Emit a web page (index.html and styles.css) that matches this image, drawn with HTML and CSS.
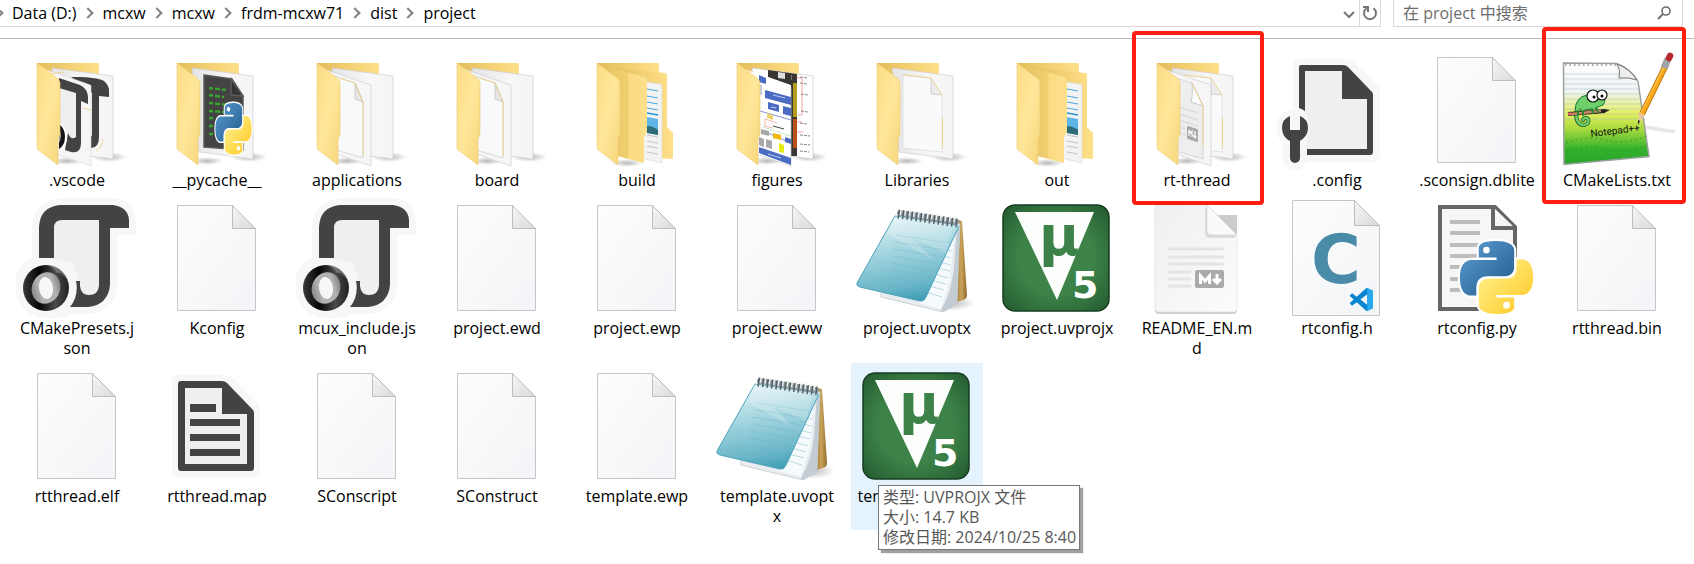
FILE: index.html
```
<!DOCTYPE html>
<html lang="zh-CN">
<head>
<meta charset="utf-8">
<title>project</title>
<link rel="stylesheet" href="styles.css">
</head>
<body>
<svg class="defs" aria-hidden="true">
  <defs>
    <linearGradient id="gFlap" x1="0" y1="0" x2="1" y2="1"><stop offset="0" stop-color="#fdde86"/><stop offset=".5" stop-color="#ffe69a"/><stop offset="1" stop-color="#f6d67a"/></linearGradient>
    <linearGradient id="gBack" x1="0" y1="0" x2="1" y2="0"><stop offset="0" stop-color="#e3bd58"/><stop offset="1" stop-color="#ffe08a"/></linearGradient>
    <linearGradient id="gInner" x1="0" y1="0" x2="1" y2="0"><stop offset="0" stop-color="#e9c765"/><stop offset=".5" stop-color="#f0cf70"/><stop offset=".55" stop-color="#fbdc82"/><stop offset="1" stop-color="#fbdf8b"/></linearGradient>
    <linearGradient id="gSheet" x1="0" y1="0" x2="1" y2="0"><stop offset="0" stop-color="#e4e4e6"/><stop offset=".6" stop-color="#f7f7f8"/><stop offset="1" stop-color="#f5f5f6"/></linearGradient>
    <linearGradient id="gDoc" x1="0" y1="0" x2="1" y2="1"><stop offset="0" stop-color="#fdfdfd"/><stop offset="1" stop-color="#f3f4f7"/></linearGradient>
    <linearGradient id="gFold" x1="0" y1="0" x2="1" y2="1"><stop offset="0" stop-color="#f6f6f6"/><stop offset="1" stop-color="#dadada"/></linearGradient>
    <radialGradient id="gShade"><stop offset="0" stop-color="#000" stop-opacity=".28"/><stop offset="1" stop-color="#000" stop-opacity="0"/></radialGradient>
    <linearGradient id="gRingOut" x1="0" y1="0" x2="1" y2="0"><stop offset="0" stop-color="#3a3a3a"/><stop offset=".35" stop-color="#050505"/><stop offset=".7" stop-color="#4a4a4a"/><stop offset="1" stop-color="#222"/></linearGradient>
    <linearGradient id="gRingIn" x1="0" y1="1" x2="1" y2="0"><stop offset="0" stop-color="#666"/><stop offset=".35" stop-color="#b4b4b4"/><stop offset=".7" stop-color="#b0b0b0"/><stop offset="1" stop-color="#555"/></linearGradient>
    <linearGradient id="gPyBlue" x1="0" y1="0" x2="1" y2="1"><stop offset="0" stop-color="#5a9fd4"/><stop offset="1" stop-color="#24588a"/></linearGradient>
    <linearGradient id="gPyGold" x1="0" y1="0" x2="1" y2="1"><stop offset=".3" stop-color="#ffe873"/><stop offset="1" stop-color="#ffc620"/></linearGradient>
    <linearGradient id="gCover" x1=".4" y1="0" x2=".6" y2="1"><stop offset="0" stop-color="#e2f3f7"/><stop offset=".35" stop-color="#a9d8e2"/><stop offset=".8" stop-color="#69b6c8"/><stop offset="1" stop-color="#3f9db5"/></linearGradient>
    <linearGradient id="gWood" x1="0" y1="0" x2="1" y2="0"><stop offset="0" stop-color="#8a6526"/><stop offset=".6" stop-color="#c9a35a"/><stop offset="1" stop-color="#8f6a2b"/></linearGradient>
    <radialGradient id="gGreen" r=".7"><stop offset=".5" stop-color="#3d8349"/><stop offset="1" stop-color="#23592f"/></radialGradient>
    <linearGradient id="gMd" x1="0" y1="0" x2="1" y2="1"><stop offset="0" stop-color="#efefef"/><stop offset="1" stop-color="#fcfcfc"/></linearGradient>
    <linearGradient id="gNpp" x1="0" y1="0" x2="0" y2="1"><stop offset="0" stop-color="#fdfdfd"/><stop offset=".28" stop-color="#f0f4f4"/><stop offset=".5" stop-color="#e6ee5c"/><stop offset=".65" stop-color="#a8da3e"/><stop offset=".85" stop-color="#34b22c"/><stop offset="1" stop-color="#27a42a"/></linearGradient>

    <symbol id="python" viewBox="-1 -1 26 26">
      <g stroke="#fff" stroke-width="1.4" stroke-linejoin="round" paint-order="stroke">
      <path fill="url(#gPyBlue)" d="M14.25.18l.9.2.73.26.59.3.45.32.34.34.25.34.16.33.1.3.04.26.02.2-.01.13V8.5l-.05.63-.13.55-.21.46-.26.38-.3.31-.33.25-.35.19-.35.14-.33.1-.3.07-.26.04-.21.02H8.77l-.69.05-.59.14-.5.22-.41.27-.33.32-.27.35-.2.36-.15.37-.1.35-.07.32-.04.27-.02.21v3.06H3.17l-.21-.03-.28-.07-.32-.12-.35-.18-.36-.26-.36-.36-.35-.46-.32-.59-.28-.73-.21-.88-.14-1.05-.05-1.23.06-1.22.16-1.04.24-.87.32-.71.36-.57.4-.44.42-.33.42-.24.4-.16.36-.1.32-.05.24-.01h.16l.06.01h8.16v-.83H6.18l-.01-2.75-.02-.37.05-.34.11-.31.17-.28.25-.26.31-.23.38-.2.44-.18.51-.15.58-.12.64-.1.71-.06.77-.04.84-.02 1.27.05z"/>
      <path fill="url(#gPyGold)" d="M21.04 6.11l.28.06.32.12.35.18.36.27.36.35.35.47.32.59.28.73.21.88.14 1.04.05 1.23-.06 1.23-.16 1.04-.24.86-.32.71-.36.57-.4.45-.42.33-.42.24-.4.16-.36.09-.32.05-.24.02-.16-.01h-8.22v.82h5.84l.01 2.76.02.36-.05.34-.11.31-.17.29-.25.25-.31.24-.38.2-.44.17-.51.15-.58.13-.64.09-.71.07-.77.04-.84.01-1.27-.04-1.07-.14-.9-.2-.73-.25-.59-.3-.45-.33-.34-.34-.25-.34-.16-.33-.1-.3-.04-.25-.02-.2.01-.13v-5.34l.05-.64.13-.54.21-.46.26-.38.3-.32.33-.24.35-.2.35-.14.33-.1.3-.06.26-.04.21-.02.13-.01h5.84l.69-.05.59-.14.5-.21.41-.28.33-.32.27-.35.2-.36.15-.36.1-.35.07-.32.04-.28.02-.21V6.07h2.09l.14.01z"/>
      </g>
      <circle cx="8.7" cy="2.95" r="1.1" fill="#fff"/><circle cx="15.3" cy="21.1" r="1.1" fill="#fff"/>
    </symbol>

    <g id="folderBack"><ellipse cx="98" cy="110" rx="18" ry="5" fill="url(#gShade)"/><ellipse cx="56" cy="114" rx="16" ry="4" fill="url(#gShade)"/><path fill="url(#gBack)" d="M26 16h61q1 0 1 1v40H26z"/></g>
    <g id="folderFront"><path fill="url(#gFlap)" stroke="#eccb70" stroke-width=".6" d="M26 16L46 31q3 2 3 5v51l-2 5v26L26 102z"/></g>
    <path id="sheetBack" fill="url(#gSheet)" stroke="#cfcfcf" stroke-width=".7" d="M41 21l61 8v83l-54-7z"/>
    <path id="sheetFront" fill="#f6f6f7" stroke="#cfcfcf" stroke-width=".7" d="M33 22l47 16v81l-35-12V32z"/>
    <g id="docBack"><path fill="#f9fafb" stroke="#cfcfcf" stroke-width=".7" stroke-dasharray="3 1" d="M52 28l28 3 11 17v57l-39-4z"/><path fill="#ececec" stroke="#bbb" stroke-width=".6" d="M80 31v16l11 1"/><path fill="none" stroke="#efcf78" stroke-width=".8" d="M52 28l28 3 11 17M91.500 71v29"/></g>
    <g id="docFront"><path fill="#f8f9fb" stroke="#ccc" stroke-width=".7" d="M44 29l20 7 8 19v56l-27-8z"/><path fill="#e6e6e6" stroke="#bbb" stroke-width=".6" d="M64 36v16l8 3z"/><path fill="none" stroke="#efcf78" stroke-width=".8" d="M48 31l16 5 8 19v54"/></g>

    <symbol id="f-docs" viewBox="0 0 132 124"><use href="#folderBack"/><use href="#sheetBack"/><use href="#sheetFront"/><use href="#docFront"/><use href="#folderFront"/></symbol>
    <symbol id="f-one" viewBox="0 0 132 124"><use href="#folderBack"/><use href="#sheetBack"/><use href="#docBack"/><use href="#folderFront"/></symbol>
    <symbol id="f-md" viewBox="0 0 132 124"><use href="#folderBack"/><use href="#sheetBack"/><use href="#docBack"/><use href="#sheetFront"/>
      <path fill="#eee" stroke="#ccc" stroke-width=".7" d="M42 30l19 6 11 23v53l-27-8z"/><path fill="#fafafa" stroke="#bbb" stroke-width=".7" d="M61 36q1 12-1 19l12 4z"/><path fill="none" stroke="#efcf78" stroke-width=".8" d="M61 36l11 23v40"/>
      <path stroke="#dcdcdc" stroke-width="1.500" d="M48 60l19 6M48 67l19 6M48 73l19 6M48 80l7 2M48 86l7 2"/><path fill="#a8a8a8" d="M57 79l9 3q1 0 1 1v11q0 1-1 1l-9-3q-1 0-1-1V80z"/><path fill="none" stroke="#fff" stroke-width="1.200" d="M58 89v-6l1.500 3 1.500-2v6M64 84v6m-2-2l2 3 1.500-2"/>
      <use href="#folderFront"/></symbol>
    <symbol id="f-vscode" viewBox="0 0 132 124"><use href="#folderBack"/><use href="#sheetBack"/>
      <path fill="#434343" d="M60 30q19 0 31 4 7 3 7 10v6l-10-1v41q0 11-8 11h-4V88q3 5 5 0V46z"/><path fill="#f6f6f7" d="M33 22l47 16v81l-35-12V32z" stroke="#d5d5d5" stroke-width=".6"/>
      <path fill="#434343" d="M62 30q24 0 31 4 5 4 5 12v3l-12-1-6-10z"/>
      <path fill="#eeeef0" d="M48 40l18 5v48q-4 7-9-1l-9-7z"/><path fill="#434343" d="M48 31l21 7q8 4 8 12v7l-7-3v42q0 11-10 9l-6-2 3-17q3 8 8 4V46l-17-5z"/><path fill="#fff" d="M48 75q8 5 8 15t-8 16z"/><path fill="#141414" d="M48 77q6 4 6 13 0 8-6 12z"/><path fill="#999" d="M48 82q4 7 0 14z"/><path fill="none" stroke="#efcf78" stroke-width=".8" d="M40 27q7-2 14-2M72 61l8 2M92 92q-1 8-7 12"/>
      <use href="#folderFront"/></symbol>
    <symbol id="f-py" viewBox="0 0 132 124"><use href="#folderBack"/><use href="#sheetBack"/>
      <path fill="#434343" stroke="#5b5b5b" stroke-width="1.500" d="M53 28l28 4 11 17v54l-39-3z"/><path fill="#333" stroke="#5b5b5b" stroke-width="1.500" d="M80 32v16l12 1z"/><path fill="none" stroke="#38a52f" stroke-width="2.400" stroke-dasharray="4 2 5 2" d="M58 41l18 2M58 48l15 2M58 56l20 2M58 64l15 1M58 71h6M58 79h6M58 87h6"/>
      <g transform="translate(64.500 56) scale(1.500 2.150)"><use href="#python" x="-1" y="-1" width="26" height="26"/></g><use href="#folderFront"/></symbol>
    <symbol id="f-nested" viewBox="0 0 132 124"><ellipse cx="56" cy="116" rx="16" ry="4" fill="url(#gShade)"/><path fill="url(#gBack)" d="M26 16h61q1 0 1 1v30H26z"/>
      <path fill="url(#gBack)" d="M37 20l57 6q2 0 2 2v52l6 6v25q0 1-1 1l-27-2V50z"/><path fill="#f3f3f4" stroke="#d8d8d8" stroke-width=".6" d="M70 34l19 3q2 0 2 2v77l-21-5z"/>
      <path stroke="#4aa8dc" stroke-width="1" d="M76 42l11 2M76 49l11 2M76 55l11 2M76 61l11 2"/><path stroke="#2492d0" stroke-width="1.500" d="M76 66l11 2"/><path fill="#5fb4e6" d="M76 70l11 2v16l-11-2z"/><path fill="#2c6b78" d="M76 79q6 0 11 4v5l-11-2z"/><path stroke="#c4c4c4" d="M76 88l11 2M76 94l11 2M76 99l11 2M76 105l11 2"/>
      <path fill="url(#gInner)" d="M37 20l37 10q2 1 2 3v52l-3 5v26l-27-7V33z"/><use href="#folderFront"/></symbol>
    <symbol id="f-fig" viewBox="0 0 132 124"><use href="#folderBack"/><path fill="#fff" stroke="#ccc" stroke-width=".7" d="M41 21l61 8v83l-54-7z"/>
      <path fill="#3a3634" d="M57 23l29 4v82h-6V38l-23-8z"/><path fill="#777" d="M76 27l5 1v5l-5-1z"/><path fill="#b39d1f" d="M82 36h4v34h-4z"/><path fill="#b9521a" d="M82 72h4v29h-4z"/><path stroke="#888" stroke-width="1" stroke-dasharray="3 1" d="M89 30l8 1M89 36l7 1M90 47l7 1M90 64l7 1M89 76l7 1M89 88l10 1M89 97l10 1M89 104l9 1"/><path fill="none" stroke="#e26a6a" stroke-width=".6" d="M86 31h5v37h-4M86 75h5M86 85h6"/>
      <path fill="#fff" d="M33 22l47 16v81l-35-12V32z"/><path fill="none" stroke="#ccc" stroke-width=".7" d="M80 40v79l-35-12"/><path fill="#3a3634" d="M57 24l23 3v11l-19-7z"/><path fill="#ddd" d="M67 25l7 1v6l-7-1z"/>
      <path fill="#4c6cc4" d="M48 28l7 3v6l-7-2zM54 43l26 7v8l-26-7zM57 55l11 3v7l-11-3zM72 59l8 2v8l-8-2zM48 100l32 11v7l-32-12zM74 90l6 2v5l-6-2z"/><path stroke="#bccaf0" stroke-width="1" d="M62 48l12 3M60 60l5 1M57 107l13 4"/><path fill="none" stroke="#4c6cc4" stroke-width=".7" d="M49 64l31 9M50 83l30 13M50 38v10"/><path fill="#ecd36c" d="M56 66l6 2v5l-6-2z"/><path fill="#f2b705" d="M62 86l8 2v5l-8-2z"/><path fill="#e6ea15" d="M68 96l5 2v8l-5-1z"/><path fill="#a8a8a8" d="M50 82l8 2v5l-8-2zM48 90l5 2v8l-5-2zM55 92l6 2v8l-6-2z"/><path stroke="#444" stroke-width="1" d="M62 79l11 3"/><path fill="none" stroke="#e98" stroke-width=".7" d="M54 72v7l8 2M54 72l12 4"/><path stroke="#9cd69c" stroke-width=".6" d="M52 80l27 9"/>
      <use href="#folderFront"/></symbol>

    <symbol id="doc" viewBox="0 0 132 124"><path fill="url(#gDoc)" stroke="#c6c6c6" d="M26.500 10.500h55l23 23v82h-78z"/><path fill="url(#gFold)" stroke="#bdbdbd" d="M81.500 10.500v23h23z"/></symbol>
    <symbol id="config" viewBox="0 0 132 124"><path fill="#f7f7f7" d="M29 12h46q5 0 8 3l23 23q3 3 3 8v62q0 7-7 7H30V90h-8V19q0-7 7-7z"/><circle cx="24" cy="81" r="19" fill="#f7f7f7"/><rect x="12" y="88" width="24" height="35" rx="12" fill="#f7f7f7"/>
      <path fill="#efeff1" d="M33 23h40l25 27v52H36V88q6-14-3-23z"/><path fill="#434343" d="M30 18h42q3 0 5 2l24 25q1 1 1 3v57q0 3-3 3H36v-6h60V52H71V24H34v40q-3-2-6-3V20q0-2 2-2z"/><path fill="#434343" d="M19 69v14h10V69q8 3 8 12 0 8-8 13v17a5 5 0 0 1-10 0V94q-8-4-8-13 0-9 8-12z"/></symbol>
    <symbol id="map" viewBox="0 0 132 124"><path fill="#f7f7f7" d="M28 12h46q5 0 8 3l24 24q3 3 3 8v60q0 7-7 7H28q-7 0-7-7V19q0-7 7-7z"/><path fill="#434343" d="M30 18h41q3 0 5 2l26 27q1 1 1 3v55q0 3-3 3H30q-3 0-3-3V21q0-3 3-3z"/><path fill="#efeff1" d="M34 25h37v26h25v50H34z"/><path fill="#434343" d="M39 41h26v8H39zM39 56h50v7H39zM39 71h50v7H39zM39 86h50v7H39z"/></symbol>
    <symbol id="json" viewBox="0 0 132 124"><path fill="#f7f7f7" d="M49 3h54q22 4 22 25v12h-19v50q-2 27-29 29H59q-10 6-24 4Q10 121 5 98V78h2q5-13 14-16V32Q23 6 49 3z"/><path fill="#efeff1" d="M43 33q0-8 8-8h37v66q-1 9-10 9-8 0-9-9L62 68l-19-5z"/>
      <path fill="#434343" d="M28 63V32Q29 12 49 10h53q15 2 16 15v8H99v57q-2 20-22 22H59q9-11 6-26h4v5q1 9 9 9 9 0 10-9V25H51q-8 0-8 8v30z"/><circle cx="35" cy="93" r="30" fill="#f7f7f7"/>
      <circle cx="35" cy="93" r="23" fill="url(#gRingOut)"/><path fill="#999" opacity=".55" d="M36 70q15 1 19 13-5-6-9-5-4-6-10-8z"/>
      <ellipse cx="35" cy="93" rx="14" ry="16" fill="url(#gRingIn)" transform="rotate(25 35 93)"/><ellipse cx="35" cy="93" rx="7" ry="11" fill="#f7f7f7" transform="rotate(-8 35 93)"/></symbol>
    <symbol id="pad" viewBox="0 0 132 124"><ellipse cx="100" cy="108" rx="24" ry="8" fill="url(#gShade)"/><path fill="url(#gWood)" d="M107 25l4 1 5 74q0 4-4 5l-10 3z"/><path fill="#e9edf0" stroke="#b9c2c8" stroke-width=".7" d="M106 27l3 2-3 80-14 8-62-15v-5l41 9z"/><path fill="#f5fafc" d="M104 32l-5 52-9 30-22-6 6-5z"/><path fill="#c3ccd2" d="M106 30l3 1-3 78-14 8q-3-1-1-4 9-14 12-40z"/><path stroke="#9fcbd8" stroke-width=".7" d="M95 55l6 1M92 61l8 2M89 67l11 3M86 73l13 3M83 79l14 4M80 85l15 4M78 91l15 4M75 97l16 5"/>
      <path fill="url(#gCover)" stroke="#4ba3b8" d="M44 21l62 9q2 1 1 3L75 102q-2 5-6 4L9 92q-4-1-3-4z"/><path stroke="#72b5c7" stroke-width=".5" opacity=".8" d="M45 40l53 8M44 47l50 8M42 54l49 8M41 61l46 8M39 68l45 8M38 75l42 7M36 82l41 7M34 89l40 7"/><path fill="#fff" opacity=".2" d="M44 21l-9 17 46 26-18-20 32 14 7-29z"/>
      <path stroke="#8b959b" stroke-width="6" stroke-linecap="round" d="M49 18l56 9"/><path stroke="#555e63" stroke-width="9" stroke-dasharray="1.500 3" d="M47 19l59 9"/><path stroke="#e9eef0" stroke-width="6" stroke-dasharray="1.500 3" d="M49 17l58 8"/></symbol>
    <symbol id="keil" viewBox="0 0 132 124"><rect x="12" y="10" width="106" height="106" rx="12" fill="url(#gGreen)" stroke="#153c20" stroke-width="1.500"/><path fill="#fcfefc" d="M24 17h79l-37 88z"/><text x="48" y="60" class="mu">µ</text><text x="81" y="103" class="five">5</text></symbol>
    <symbol id="md" viewBox="0 0 132 124"><path fill="#ccc" d="M24 20h82v95q0 4-4 4H28q-4 0-4-4z"/><path fill="url(#gMd)" stroke="#e2e2e2" stroke-width=".8" d="M28 10h48l30 30v73q0 4-4 4H28q-4 0-4-4V14q0-4 4-4z"/><path fill="#000" opacity=".1" d="M74 12v26q0 5 5 5h25l1-4z"/><path fill="#fafafa" stroke="#d4d4d4" stroke-width=".8" d="M76 10v26q0 4 4 4h26z"/><path stroke="#e4e4e4" stroke-width="3" stroke-linecap="round" d="M38 54h54M38 62h54M38 69h54M38 77h21M38 84h21M38 91h21"/><rect x="64" y="75" width="29" height="18" rx="2" fill="#aaa"/><path fill="none" stroke="#fff" stroke-width="3" d="M69.500 89v-8l4.500 5 4.500-5v8M86 79v8m-4-3l4 4 4-4"/></symbol>
    <symbol id="chead" viewBox="0 0 132 124"><path fill="url(#gDoc)" stroke="#c6c6c6" d="M21.500 5.500h62l25 25v90h-87z"/><path fill="url(#gFold)" stroke="#bdbdbd" d="M83.500 5.500v25h25z"/><text x="40" y="88" class="cee">C</text><svg x="79" y="93" width="23" height="23" viewBox="0 0 24 24"><path fill="#0a84d0" d="M23.150 2.587L18.210.210a1.494 1.494 0 0 0-1.705.290l-9.460 8.630-4.120-3.128a.999.999 0 0 0-1.276.057L.327 7.261A1 1 0 0 0 .326 8.740L3.899 12 .326 15.260a1 1 0 0 0 .001 1.479L1.650 17.940a.999.999 0 0 0 1.276.057l4.120-3.128 9.460 8.630a1.492 1.492 0 0 0 1.704.290l4.942-2.377A1.500 1.500 0 0 0 24 20.060V3.939a1.500 1.500 0 0 0-.850-1.352zm-5.146 14.861L10.826 12l7.178-5.448v10.896z"/><path fill="#28a9f0" d="M18 0l5.500 2.600q.5.400.5 1.300v16.200q0 .9-.5 1.300L18 24z"/></svg></symbol>
    <symbol id="pydoc" viewBox="0 0 132 124"><path fill="#f6f6f6" stroke="#666" stroke-width="4" d="M29 12h55l20 20v82H29z"/><path fill="#f6f6f6" stroke="#666" stroke-width="4" d="M82 12v21h22"/><path stroke="#bdbdbd" stroke-width="4" d="M39 27h30M39 38h30M39 50h30M39 61h30M39 72h20M39 84h20M39 95h20"/><path fill="#fff" d="M70 90h40v30H68z"/><use href="#python" x="46" y="43" width="79" height="79"/></symbol>
    <symbol id="npp" viewBox="0 0 132 124"><path fill="#ddd" d="M92 78l32 5q2 4-4 3l-28-4z" opacity=".7"/><path fill="url(#gNpp)" stroke="#9aa09a" stroke-width="1.500" d="M12.500 16l53 .5q14 5 21.500 18l11 75-85 8z"/><path fill="none" stroke="#9dbcc4" stroke-width=".7" opacity=".7" d="M14 27h56M14 32h58M14 37h71M14 42h73M14 47h74M14 52h74M14 57h75M14 62h75M14 67h76M14 72h77"/><path stroke="#aaa" stroke-width="2" stroke-dasharray="1.500 3" d="M14 18h53"/><path fill="#eee" stroke="#777" d="M66 17q4 6 2 14 10-1 18 2-7-11-20-16z"/>
      <path stroke="#1f8f22" fill="none" stroke-width="2" opacity=".35" stroke-dasharray="2 3" d="M15 96q20-8 40-3t40-4M15 105q20-8 40-3t42-4"/>
      <path fill="#6fcf6a" stroke="#173" stroke-width="1" d="M24 65q0-15 12-17 6-1 9 2h8q2 5-1 8l-8 3 3 5h-4l-3-4-6 1-1 4h-4l1-5q-4 1-5 7z"/><path fill="none" stroke="#1c5a25" stroke-width="4" stroke-linecap="round" d="M25 66q0 12 8 12 6-1 4-6-3-3-5 1"/><path fill="none" stroke="#6fcf6a" stroke-width="2.500" stroke-linecap="round" d="M25 65q0 13 8 13 6-1 4-6-3-3-5 1"/>
      <path stroke="#222" stroke-width="4" d="M17 67l37-3"/><path stroke="#c98b63" stroke-width="2.500" d="M20 67l30-3"/><path stroke="#d66" stroke-width="3" d="M17 67l3-.2"/><path fill="#222" d="M53 62l6 1-6 3z"/><path stroke="#2c8a34" stroke-width="2" stroke-linecap="round" d="M27 64v4M32 64v4M41 62l1 4M46 62l1 3"/>
      <circle cx="42" cy="49" r="6" fill="#fff" stroke="#111" stroke-width="1.200"/><circle cx="51" cy="48" r="5" fill="#fff" stroke="#111" stroke-width="1.200"/><circle cx="43" cy="50" r="1.500"/><circle cx="51" cy="49" r="1.500"/>
      <text class="npp" transform="translate(40 90) rotate(-7)">Notepad++</text>
      <path stroke="#b26a09" stroke-width="6" d="M115 18L91 67"/><path stroke="#f7a416" stroke-width="4.500" d="M115 18L91 67"/><path stroke="#ffd05b" stroke-width="1" d="M114 18L90 66"/><path fill="#e7c79a" d="M88 65l6 3-7 10z"/><path fill="#222" d="M87 73l2 1-2 4z"/><path stroke="#9ea3a8" stroke-width="7" d="M117 12l-4 9"/><path stroke="#b4292c" stroke-width="6.500" stroke-linecap="round" d="M119 9l-1 2"/></symbol>
  </defs>
</svg>

<header class="bar">
  <nav class="address" aria-label="路径">
    <ol class="crumbs">
      <li class="lead"></li>
      <li><a href="#data">Data (D:)</a></li>
      <li><a href="#mcxw">mcxw</a></li>
      <li><a href="#mcxw2">mcxw</a></li>
      <li><a href="#frdm">frdm-mcxw71</a></li>
      <li><a href="#dist">dist</a></li>
      <li><a href="#project">project</a></li>
    </ol>
    <button class="drop" type="button" aria-label="历史"><svg width="12" height="8" viewBox="0 0 12 8"><path d="M1 1l5 5 5-5" fill="none" stroke="#767676" stroke-width="2"/></svg></button>
    <button class="reload" type="button" aria-label="刷新"><svg width="16" height="16" viewBox="0 0 16 16"><path d="M11.500 3.300A6 6 0 1 1 4.500 3.300" fill="none" stroke="#767676" stroke-width="2"/><path d="M1 2h5v5" fill="none" stroke="#767676" stroke-width="2"/></svg></button>
  </nav>
  <div class="search">
    <input type="search" aria-label="搜索" placeholder="在 project 中搜索">
    <svg width="14" height="14" viewBox="0 0 14 14" aria-hidden="true"><circle cx="9" cy="5" r="4" fill="none" stroke="#6d6d6d" stroke-width="1.600"/><path d="M6 8l-5 5" stroke="#6d6d6d" stroke-width="2"/></svg>
  </div>
</header>

<main class="files">
  <a class="tile" href="#f"><svg class="icon"><use href="#f-vscode"/></svg><span>.vscode</span></a>
  <a class="tile" href="#f"><svg class="icon"><use href="#f-py"/></svg><span>__pycache__</span></a>
  <a class="tile" href="#f"><svg class="icon"><use href="#f-docs"/></svg><span>applications</span></a>
  <a class="tile" href="#f"><svg class="icon"><use href="#f-docs"/></svg><span>board</span></a>
  <a class="tile" href="#f"><svg class="icon"><use href="#f-nested"/></svg><span>build</span></a>
  <a class="tile" href="#f"><svg class="icon"><use href="#f-fig"/></svg><span>figures</span></a>
  <a class="tile" href="#f"><svg class="icon"><use href="#f-one"/></svg><span>Libraries</span></a>
  <a class="tile" href="#f"><svg class="icon"><use href="#f-nested"/></svg><span>out</span></a>
  <a class="tile marked" href="#f"><svg class="icon"><use href="#f-md"/></svg><span>rt-thread</span></a>
  <a class="tile" href="#f"><svg class="icon"><use href="#config"/></svg><span>.config</span></a>
  <a class="tile" href="#f"><svg class="icon"><use href="#doc"/></svg><span>.sconsign.dblite</span></a>
  <a class="tile marked wide" href="#f"><svg class="icon"><use href="#npp"/></svg><span>CMakeLists.txt</span></a>

  <a class="tile" href="#f"><svg class="icon"><use href="#json"/></svg><span>CMakePresets.j<br>son</span></a>
  <a class="tile" href="#f"><svg class="icon"><use href="#doc"/></svg><span>Kconfig</span></a>
  <a class="tile" href="#f"><svg class="icon"><use href="#json"/></svg><span>mcux_include.js<br>on</span></a>
  <a class="tile" href="#f"><svg class="icon"><use href="#doc"/></svg><span>project.ewd</span></a>
  <a class="tile" href="#f"><svg class="icon"><use href="#doc"/></svg><span>project.ewp</span></a>
  <a class="tile" href="#f"><svg class="icon"><use href="#doc"/></svg><span>project.eww</span></a>
  <a class="tile" href="#f"><svg class="icon"><use href="#pad"/></svg><span>project.uvoptx</span></a>
  <a class="tile" href="#f"><svg class="icon"><use href="#keil"/></svg><span>project.uvprojx</span></a>
  <a class="tile" href="#f"><svg class="icon"><use href="#md"/></svg><span>README_EN.m<br>d</span></a>
  <a class="tile" href="#f"><svg class="icon"><use href="#chead"/></svg><span>rtconfig.h</span></a>
  <a class="tile" href="#f"><svg class="icon"><use href="#pydoc"/></svg><span>rtconfig.py</span></a>
  <a class="tile" href="#f"><svg class="icon"><use href="#doc"/></svg><span>rtthread.bin</span></a>

  <a class="tile" href="#f"><svg class="icon"><use href="#doc"/></svg><span>rtthread.elf</span></a>
  <a class="tile" href="#f"><svg class="icon"><use href="#map"/></svg><span>rtthread.map</span></a>
  <a class="tile" href="#f"><svg class="icon"><use href="#doc"/></svg><span>SConscript</span></a>
  <a class="tile" href="#f"><svg class="icon"><use href="#doc"/></svg><span>SConstruct</span></a>
  <a class="tile" href="#f"><svg class="icon"><use href="#doc"/></svg><span>template.ewp</span></a>
  <a class="tile" href="#f"><svg class="icon"><use href="#pad"/></svg><span>template.uvopt<br>x</span></a>
  <div class="hovered">
    <a class="tile" href="#f" aria-describedby="tip"><svg class="icon"><use href="#keil"/></svg><span>template.uvproj<br>x</span></a>
    <div class="tooltip" id="tip" role="tooltip">类型: UVPROJX 文件<br>大小: 14.7 KB<br>修改日期: 2024/10/25 8:40</div>
  </div>
</main>
</body>
</html>
```
FILE: styles.css
```
* { box-sizing: border-box; }
body {
  display: flex;
  flex-direction: column;
  min-height: 100vh;
  margin: 0;
  background: #fff;
  color: #000;
  font: 16px/20px "Open Sans", "Noto Sans CJK SC", sans-serif;
}
a { color: inherit; text-decoration: none; }
button { border: 0; background: none; padding: 0; font: inherit; }
.defs { position: absolute; width: 0; height: 0; }

.bar {
  display: flex;
  gap: 12px;
  height: 39px;
  padding: 0 11px 11px 0;
  border-bottom: 1px solid #b9b9b9;
}
.address {
  display: flex;
  flex: 1;
  border: solid #d9d9d9;
  border-width: 0 1px 1px 0;
}
.crumbs {
  display: flex;
  flex: 1;
  align-items: center;
  gap: 26px;
  margin: 0;
  padding: 0 0 1px;
  list-style: none;
}
.crumbs li { position: relative; }
.crumbs .lead { margin-right: -14px; }
.crumbs li:not(:last-child)::after {
  content: "";
  position: absolute;
  top: 50%;
  right: -15px;
  width: 6px;
  height: 6px;
  border: solid #858585;
  border-width: 2px 2px 0 0;
  transform: translateY(-50%) rotate(45deg);
}
.crumbs li.lead::after { right: -2px; }
.drop { display: grid; place-items: center; width: 20px; padding-top: 3px; }
.reload { display: grid; place-items: center; width: 21px; border-left: 1px solid #d9d9d9; }
.search {
  display: flex;
  align-items: center;
  width: 290px;
  padding: 0 11px 0 9px;
  border: solid #d9d9d9;
  border-width: 0 1px 1px;
}
.search input {
  flex: 1;
  min-width: 0;
  padding: 0;
  border: 0;
  outline: 0;
  font: inherit;
  background: none;
}
.search input::placeholder { color: #6d6d6d; opacity: 1; }

.files {
  display: grid;
  flex: 1;
  align-content: start;
  grid-template-columns: repeat(12, 1fr);
  gap: 1px 8px;
  padding: 8px 11px;
}
.tile {
  position: relative;
  display: flex;
  flex-direction: column;
  align-items: center;
  padding-bottom: 4px;
  text-align: center;
  white-space: nowrap;
}
.icon { display: block; width: 132px; height: 124px; margin-bottom: -1px; }
.marked::after {
  content: "";
  position: absolute;
  inset: -16px -1px -11px 1px;
  border: 4px solid #ff1e12;
  border-radius: 4px;
  z-index: 1;
}
.wide::after { inset: -20px -3px -10px -9px; }
.hovered { position: relative; }
.hovered .tile { background: #e5f3ff; }
.tooltip {
  position: absolute;
  left: 27px;
  top: 122px;
  padding: 1px 3px 2px 4px;
  border: 1px solid #767676;
  background: #fff;
  box-shadow: 3px 3px 1px #a0a0a0;
  color: #575757;
  white-space: nowrap;
}

.mu { font: bold 55px "DejaVu Sans", sans-serif; fill: #3d8349; }
.five { font: bold 38px "DejaVu Sans", sans-serif; fill: #fff; }
.cee { font: bold 68px "DejaVu Sans", sans-serif; fill: #4a8ba8; }
.npp { font: 10px Roboto, sans-serif; fill: #111; }
```
